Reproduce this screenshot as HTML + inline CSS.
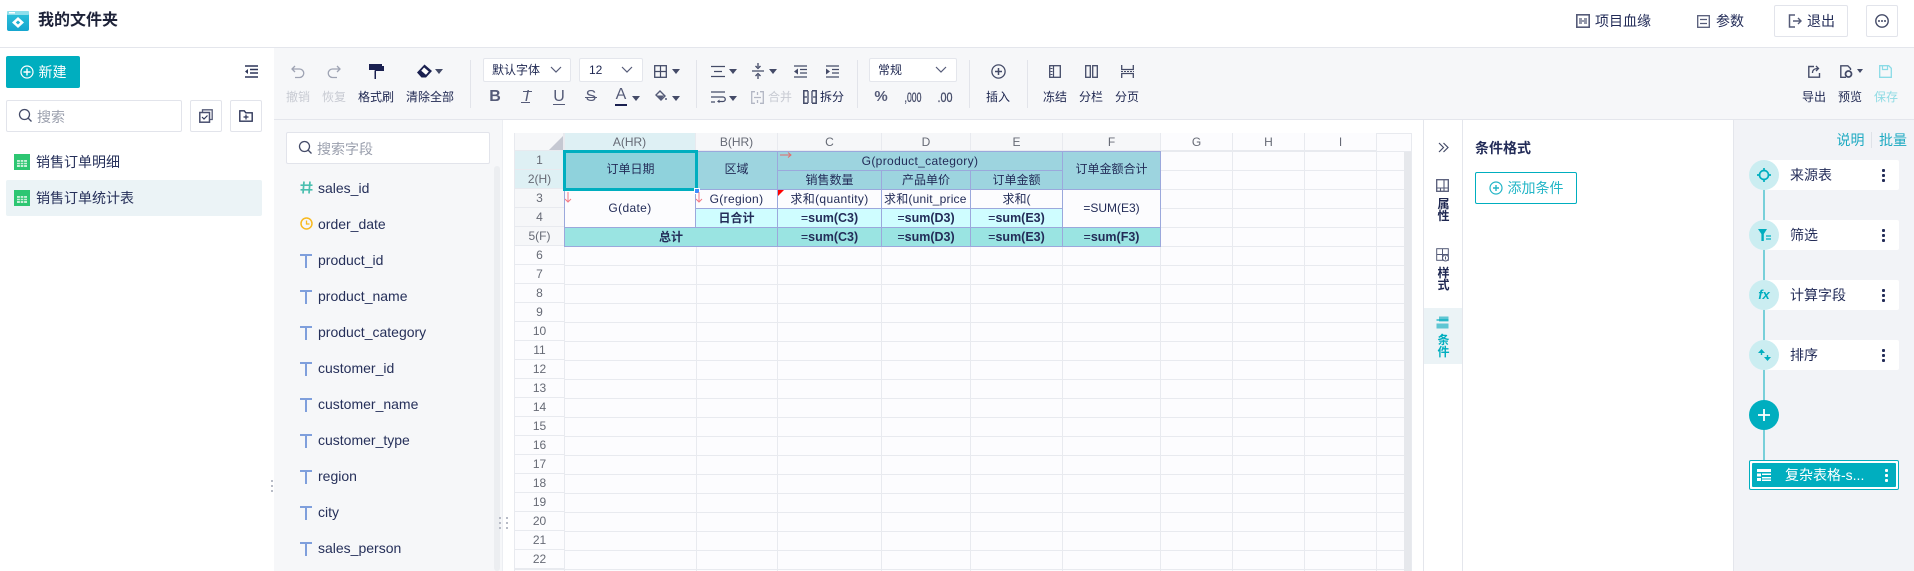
<!DOCTYPE html>
<html lang="zh"><head><meta charset="utf-8"><title>我的文件夹</title>
<style>
*{box-sizing:border-box}
html,body{margin:0;padding:0;width:1914px;height:571px;overflow:hidden;background:#fff}
body{position:relative;font-family:"Liberation Sans","Noto Sans CJK SC",sans-serif;font-size:12px;color:#1d2650}
.a{position:absolute}
.l{position:absolute;width:60px;height:18px;line-height:18px;text-align:center;top:88px;white-space:nowrap}
.dis{color:#c8cbd3}
.dv{position:absolute;width:1px;top:60px;height:48px;background:#e2e4ea}
.sel{position:absolute;top:58px;height:24px;background:#fff;border:1px solid #e4e6ec;border-radius:2px;line-height:22px;padding-left:8px;font-size:12px}
.ic{position:absolute;overflow:visible}
.box{position:absolute;background:#fff;border:1px solid #e2e4eb;border-radius:2px}
.f{position:absolute;left:318px;font-size:14px;height:20px;line-height:20px;white-space:nowrap;color:#26305a}
.t{position:absolute;left:300px;width:12px;height:14px}
.t:before{content:"";position:absolute;left:0;top:0;width:12px;height:2px;background:#7f9fdc}
.t:after{content:"";position:absolute;left:5px;top:0;width:2px;height:14px;background:#7f9fdc}
.rn{position:absolute;left:515px;width:49px;height:19px;line-height:19px;text-align:center;color:#666a75;border-bottom:1px solid #e8eaef;background:#fcfcfe}
.ch{position:absolute;top:133px;height:18px;line-height:18px;text-align:center;color:#666a75;background:#f6f7f9;border-right:1px solid #e8eaef;border-bottom:1px solid #e8eaef}
.c{position:absolute;text-align:center;border:1px solid #9ba8dc;white-space:nowrap;overflow:hidden;color:#232c58;font-size:12px}
.hd{background:#9dd4df}.sum{background:#9ae4e2;font-weight:bold}.day{background:#cffdff;font-weight:bold}.wh{background:#fcfcfe}
.c i{font-style:normal;font-weight:normal}
.s{font-size:12.5px}
.ls{letter-spacing:.35px}
.card{position:absolute;left:1764px;width:135px;height:30px;background:#fff;border-radius:2px;line-height:30px;padding-left:26px;font-size:14px;color:#232c58}
.dots{position:absolute;left:1882px;width:3px;height:13px;background:radial-gradient(circle at 1.5px 1.5px,#232c58 1.5px,transparent 1.6px) 0 0/3px 5px}
.circ{position:absolute;left:1749px;width:30px;height:30px;border-radius:50%;background:#cbedf1}
.tab{position:absolute;left:1425px;width:37px;text-align:center;font-size:12px;line-height:12px;font-weight:bold}
.gl{position:absolute;top:151px;width:1px;height:420px;background:#e8eaef}
.tb{position:absolute;top:87px;width:16px;text-align:center;font-size:16px;line-height:20px;color:#555b78}
</style></head><body>

<!-- header -->
<div class="a" style="left:0;top:47px;width:1914px;height:1px;background:#e4e6ec"></div>
<svg class="ic" style="left:7px;top:11px" width="22" height="20" viewBox="0 0 22 20"><defs><linearGradient id="g1" x1="0" y1="0" x2="0" y2="1"><stop offset="0" stop-color="#2fc3db"/><stop offset="1" stop-color="#16a6cf"/></linearGradient></defs><rect width="22" height="20" rx="2" fill="url(#g1)"/><rect width="22" height="4" rx="1" fill="#8fdfec"/><rect x="2" y="1" width="6" height="1.500" fill="#fff"/><path d="M11 6l6 5.500-6 5.500-6-5.500z" fill="#fff"/><path d="M11 9.500l2.200 2-2.200 2-2.200-2z" fill="#1fb0d3"/></svg>
<div class="a" style="left:38px;top:10px;font-size:16px;font-weight:bold;line-height:22px;color:#1d2238">我的文件夹</div>

<svg class="ic" style="left:1576px;top:14px" width="14" height="14" viewBox="0 0 14 14"><rect x=".8" y=".8" width="12.4" height="12.4" fill="none" stroke="#555b78" stroke-width="1.6"/><path d="M3 5h3M3 9h3M8 5h3M8 9h3M3 7h8" stroke="#555b78" stroke-width="1.3"/></svg>
<div class="a" style="left:1595px;top:11px;line-height:20px;font-size:14px;color:#232c58">项目血缘</div>
<svg class="ic" style="left:1697px;top:15px" width="13" height="13" viewBox="0 0 13 13"><rect x=".7" y=".7" width="11.6" height="11.6" fill="none" stroke="#555b78" stroke-width="1.3"/><path d="M3 4.500h7M3 8.500h7" stroke="#555b78" stroke-width="1.3"/></svg>
<div class="a" style="left:1716px;top:11px;line-height:20px;font-size:14px;color:#232c58">参数</div>
<div class="box" style="left:1774px;top:5px;width:74px;height:32px"></div>
<svg class="ic" style="left:1788px;top:14px" width="15" height="14" viewBox="0 0 15 14"><path d="M7 1H1.500v12H7" fill="none" stroke="#555b78" stroke-width="1.500"/><path d="M5 7h8M10 4l3 3-3 3" fill="none" stroke="#555b78" stroke-width="1.400"/></svg>
<div class="a" style="left:1807px;top:11px;line-height:20px;font-size:14px;color:#232c58">退出</div>
<div class="box" style="left:1866px;top:5px;width:32px;height:32px"></div>
<svg class="ic" style="left:1875px;top:14px" width="14" height="14" viewBox="0 0 14 14"><circle cx="7" cy="7" r="6.200" fill="none" stroke="#444b68" stroke-width="1.400"/><circle cx="4" cy="7" r="1" fill="#444b68"/><circle cx="7" cy="7" r="1" fill="#444b68"/><circle cx="10" cy="7" r="1" fill="#444b68"/></svg>

<!-- left sidebar -->
<div class="a" style="left:6px;top:56px;width:74px;height:32px;background:#00aebf;border-radius:2px"></div>
<svg class="ic" style="left:20px;top:65px" width="14" height="14" viewBox="0 0 14 14"><circle cx="7" cy="7" r="6" fill="none" stroke="#fff" stroke-width="1.200"/><path d="M7 3.500v7M3.500 7h7" stroke="#fff" stroke-width="1.400"/></svg>
<div class="a" style="left:38.500px;top:62px;line-height:20px;font-size:14px;color:#fff">新建</div>
<svg class="ic" style="left:244px;top:65px" width="14" height="13" viewBox="0 0 14 13"><path d="M1 1h13M6 4.500h8M6 8h8M1 12h13" stroke="#2d3558" stroke-width="1.500"/><path d="M4 4L1 6.500 4 9z" fill="#2d3558"/></svg>

<div class="box" style="left:6px;top:100px;width:176px;height:32px"></div>
<svg class="ic" style="left:18px;top:108px" width="15" height="15" viewBox="0 0 15 15"><circle cx="6.500" cy="6.500" r="5" fill="none" stroke="#444b68" stroke-width="1.300"/><path d="M10 10l3.500 3.500" stroke="#444b68" stroke-width="1.300"/></svg>
<div class="a" style="left:37px;top:107px;line-height:20px;font-size:14px;color:#9a9fad">搜索</div>
<div class="box" style="left:190px;top:100px;width:32px;height:32px"></div>
<svg class="ic" style="left:199px;top:109px" width="14" height="14" viewBox="0 0 14 14"><path d="M3.500 3V.8h9.700v9.700H11" fill="none" stroke="#555b78" stroke-width="1.300"/><rect x=".8" y="3.500" width="9.700" height="9.700" fill="none" stroke="#4a5070" stroke-width="1.500"/><path d="M3 8l2 2 3.500-3.500" fill="none" stroke="#2d3558" stroke-width="1.200"/></svg>
<div class="box" style="left:230px;top:100px;width:32px;height:32px"></div>
<svg class="ic" style="left:239px;top:110px" width="14" height="12" viewBox="0 0 14 12"><path d="M.8.800h4.500l1.500 2h6.400v8.400H.8z" fill="none" stroke="#2d3558" stroke-width="1.400"/><path d="M7 4.500v5M4.500 7h5" stroke="#2d3558" stroke-width="1.200"/></svg>

<svg class="ic" style="left:14px;top:154px" width="16" height="16" viewBox="0 0 16 16"><rect width="16" height="16" fill="#2dc672"/><path d="M3 6h10v7H3z" fill="#c9f0d9"/><path d="M3 8.300h10M3 10.600h10M6.300 6v7M9.700 6v7" stroke="#2dc672" stroke-width=".8"/></svg>
<div class="a" style="left:36px;top:152px;line-height:20px;font-size:14px;color:#26305a">销售订单明细</div>
<div class="a" style="left:6px;top:180px;width:256px;height:36px;background:#ebf3f6;border-radius:2px"></div>
<svg class="ic" style="left:14px;top:190px" width="16" height="16" viewBox="0 0 16 16"><rect width="16" height="16" fill="#2dc672"/><path d="M3 6h10v7H3z" fill="#c9f0d9"/><path d="M3 8.300h10M3 10.600h10M6.300 6v7M9.700 6v7" stroke="#2dc672" stroke-width=".8"/></svg>
<div class="a" style="left:36px;top:188px;line-height:20px;font-size:14px;color:#26305a">销售订单统计表</div>

<!-- toolbar bg -->
<div class="a" style="left:274px;top:48px;width:1640px;height:71px;background:#f6f7f9"></div>
<div class="a" style="left:274px;top:119px;width:1640px;height:1px;background:#e4e6ec"></div>

<svg class="ic" style="left:291px;top:65px" width="14" height="14" viewBox="0 0 14 14"><path d="M4 1L1 4l3 3" fill="none" stroke="#9ea3b3" stroke-width="1.300"/><path d="M1 4h7.500a4.200 4.200 0 0 1 0 8.500H4" fill="none" stroke="#9ea3b3" stroke-width="1.300"/></svg>
<div class="l dis" style="left:268px">撤销</div>
<svg class="ic" style="left:327px;top:65px" width="14" height="14" viewBox="0 0 14 14"><path d="M10 1l3 3-3 3" fill="none" stroke="#9ea3b3" stroke-width="1.300"/><path d="M13 4H5.500a4.200 4.200 0 0 0 0 8.500H10" fill="none" stroke="#9ea3b3" stroke-width="1.300"/></svg>
<div class="l dis" style="left:304px">恢复</div>
<svg class="ic" style="left:369px;top:64px" width="15" height="15" viewBox="0 0 15 15"><rect width="13" height="6" fill="#1a2050"/><path d="M13 2h2v5H7v8H5.500V6.500" fill="#1a2050"/></svg>
<div class="l" style="left:346px">格式刷</div>
<svg class="ic" style="left:417px;top:64px" width="16" height="14" viewBox="0 0 16 14"><path d="M7.500 .5L15 7l-6 6.500H4.500L0 8.500z" fill="#1a2050"/><path d="M7 2.800l5.500 4.700-3.500 4-5.500-4.700z" fill="#fff" stroke="#1a2050"/></svg>
<svg class="ic" style="left:435px;top:69px" width="8" height="5"><path d="M0 0h8L4 5z" fill="#444b68"/></svg>
<div class="l" style="left:400px">清除全部</div>
<div class="dv" style="left:470px"></div>

<div class="sel" style="left:483px;width:88px">默认字体</div>
<svg class="ic" style="left:550px;top:66px" width="12" height="7"><path d="M1 1l5 5 5-5" fill="none" stroke="#555b78" stroke-width="1.200"/></svg>
<div class="sel" style="left:579px;width:64px;padding-left:9px">12</div>
<svg class="ic" style="left:621px;top:66px" width="12" height="7"><path d="M1 1l5 5 5-5" fill="none" stroke="#555b78" stroke-width="1.200"/></svg>
<svg class="ic" style="left:654px;top:65px" width="13" height="13" viewBox="0 0 13 13"><rect x=".7" y=".7" width="11.600" height="11.600" fill="none" stroke="#444b68" stroke-width="1.300"/><path d="M6.500 1v11M1 6.500h11" stroke="#444b68" stroke-width="1.200"/></svg>
<svg class="ic" style="left:672px;top:69px" width="8" height="5"><path d="M0 0h8L4 5z" fill="#444b68"/></svg>

<div class="tb" style="left:487px;font-weight:bold">B</div>
<div class="tb" style="left:519px;font-style:italic">I</div>
<div class="a" style="left:523px;top:91px;width:9px;height:1px;background:#555b78"></div>
<div class="a" style="left:521px;top:102px;width:9px;height:1px;background:#555b78"></div>
<div class="tb" style="left:551px;top:87px">U</div>
<div class="a" style="left:553px;top:104px;width:12px;height:1px;background:#555b78"></div>
<div class="tb" style="left:583px">S</div>
<div class="a" style="left:585px;top:97px;width:12px;height:1px;background:#555b78"></div>
<div class="tb" style="left:613px;top:85px">A</div>
<div class="a" style="left:615px;top:104px;width:12px;height:2px;background:#1a2050"></div>
<svg class="ic" style="left:632px;top:96px" width="8" height="5"><path d="M0 0h8L4 5z" fill="#444b68"/></svg>
<svg class="ic" style="left:655px;top:90px" width="12" height="12" viewBox="0 0 12 12"><path d="M5 1l5 5-4 4-5-5z" fill="none" stroke="#555b78" stroke-width="1.400"/><path d="M2 5.500h7L6 9.500z" fill="#555b78"/><circle cx="11" cy="9" r="1" fill="#555b78"/></svg>
<svg class="ic" style="left:672px;top:96px" width="8" height="5"><path d="M0 0h8L4 5z" fill="#444b68"/></svg>
<div class="dv" style="left:696px"></div>

<svg class="ic" style="left:711px;top:65px" width="14" height="13" viewBox="0 0 14 13"><path d="M0 1.500h14M3 6.500h8M0 11.500h14" stroke="#444b68" stroke-width="1.300"/></svg>
<svg class="ic" style="left:729px;top:69px" width="8" height="5"><path d="M0 0h8L4 5z" fill="#444b68"/></svg>
<svg class="ic" style="left:752px;top:63px" width="12" height="16" viewBox="0 0 12 16"><path d="M6 0v4M3.500 3L6 5.500 8.500 3M6 16v-4M3.500 13L6 10.500 8.500 13M0 8h12" fill="none" stroke="#444b68" stroke-width="1.300"/></svg>
<svg class="ic" style="left:769px;top:69px" width="8" height="5"><path d="M0 0h8L4 5z" fill="#444b68"/></svg>
<svg class="ic" style="left:794px;top:65px" width="13" height="13" viewBox="0 0 13 13"><path d="M0 1h13M6 4.500h7M6 8h7M0 12h13" stroke="#444b68" stroke-width="1.300"/><path d="M4 3.500L0 6.500l4 3z" fill="#444b68"/></svg>
<svg class="ic" style="left:826px;top:65px" width="13" height="13" viewBox="0 0 13 13"><path d="M0 1h13M6 4.500h7M6 8h7M0 12h13" stroke="#444b68" stroke-width="1.300"/><path d="M0 3.500l4 3-4 3z" fill="#444b68"/></svg>
<svg class="ic" style="left:711px;top:91px" width="14" height="12" viewBox="0 0 14 12"><path d="M0 1h14M0 6h12a2.200 2.200 0 0 1 0 4.500H7M0 11h4" fill="none" stroke="#444b68" stroke-width="1.300"/><path d="M8.500 8.500L6 10.500l2.500 1.500z" fill="#444b68"/></svg>
<svg class="ic" style="left:729px;top:96px" width="8" height="5"><path d="M0 0h8L4 5z" fill="#444b68"/></svg>
<svg class="ic" style="left:751px;top:91px" width="13" height="13" viewBox="0 0 13 13"><path d="M4 .7H.7v11.600H4M9 .7h3.300v11.600H9M6.500 1v3M6.500 9v3M3 6.500h7" fill="none" stroke="#b3b7c4" stroke-width="1.300"/></svg>
<div class="a dis" style="left:768px;top:88px;line-height:18px">合并</div>
<svg class="ic" style="left:803px;top:90px" width="14" height="14" viewBox="0 0 14 14"><path d="M5 .8H.8v12.400H5M9 .8h4.200v12.400H9" fill="none" stroke="#444b68" stroke-width="1.500"/><path d="M5 1v12M9 1v12M1 7h3M10 7h3" stroke="#444b68" stroke-width="1.300"/></svg>
<div class="a" style="left:820px;top:88px;line-height:18px">拆分</div>
<div class="dv" style="left:857px"></div>

<div class="sel" style="left:869px;width:88px">常规</div>
<svg class="ic" style="left:935px;top:66px" width="12" height="7"><path d="M1 1l5 5 5-5" fill="none" stroke="#555b78" stroke-width="1.200"/></svg>
<div class="a" style="left:871px;top:88px;width:20px;text-align:center;font-size:15px;font-weight:bold;line-height:18px;color:#555b78">%</div>
<div class="a" style="left:893px;top:88px;width:40px;text-align:center;font-size:14px;line-height:18px;color:#444b68;transform:scaleX(.62);-webkit-text-stroke:.3px #444b68">,000</div>
<div class="a" style="left:925px;top:88px;width:40px;text-align:center;font-size:14px;line-height:18px;color:#444b68;transform:scaleX(.77);-webkit-text-stroke:.3px #444b68">.00</div>
<div class="dv" style="left:969px"></div>

<svg class="ic" style="left:991px;top:64px" width="15" height="15" viewBox="0 0 15 15"><circle cx="7.500" cy="7.500" r="6.600" fill="none" stroke="#444b68" stroke-width="1.300"/><path d="M7.500 4v7M4 7.500h7" stroke="#444b68" stroke-width="1.500"/></svg>
<div class="l" style="left:968px">插入</div>
<div class="dv" style="left:1027px"></div>
<svg class="ic" style="left:1049px;top:65px" width="12" height="13" viewBox="0 0 12 13"><rect x=".7" y=".7" width="10.600" height="11.600" fill="none" stroke="#444b68" stroke-width="1.300"/><path d="M4.500 1v11" stroke="#444b68" stroke-width="1.200"/><path d="M1.500 3.500h2M1.500 6.500h2M1.500 9.500h2" stroke="#444b68"/></svg>
<div class="l" style="left:1025px">冻结</div>
<svg class="ic" style="left:1085px;top:65px" width="13" height="13" viewBox="0 0 13 13"><rect x=".7" y=".7" width="4.600" height="11.600" fill="none" stroke="#444b68" stroke-width="1.300"/><rect x="7.700" y=".7" width="4.600" height="11.600" fill="none" stroke="#444b68" stroke-width="1.300"/></svg>
<div class="l" style="left:1061px">分栏</div>
<svg class="ic" style="left:1121px;top:65px" width="13" height="13" viewBox="0 0 13 13"><path d="M.7 0v4.500h11.600V0M.7 13V8.500h11.600V13" fill="none" stroke="#444b68" stroke-width="1.300"/><path d="M0 6.500h13" stroke="#444b68" stroke-dasharray="2 1"/></svg>
<div class="l" style="left:1097px">分页</div>

<svg class="ic" style="left:1808px;top:65px" width="13" height="13" viewBox="0 0 13 13"><path d="M6 1.500H.8v10.700h10.700V8" fill="none" stroke="#444b68" stroke-width="1.400"/><path d="M4.500 8c0-3 2-4.500 5-4.500M8 1l2.500 2.500L8 6" fill="none" stroke="#444b68" stroke-width="1.300"/></svg>
<div class="l" style="left:1784px">导出</div>
<svg class="ic" style="left:1840px;top:65px" width="14" height="13" viewBox="0 0 14 13"><path d="M6 12.300H.8V.8h7l2.700 2.700V5" fill="none" stroke="#444b68" stroke-width="1.400"/><circle cx="8.500" cy="9" r="3" fill="none" stroke="#444b68" stroke-width="1.800"/></svg>
<svg class="ic" style="left:1857px;top:69px" width="6" height="4"><path d="M0 0h6L3 4z" fill="#444b68"/></svg>
<div class="l" style="left:1820px">预览</div>
<svg class="ic" style="left:1879px;top:65px" width="13" height="13" viewBox="0 0 13 13"><path d="M.7.700h9l2.600 2.600v9H.7z" fill="none" stroke="#8adbe6" stroke-width="1.300"/><path d="M3.500 1v3.500h5V1" fill="none" stroke="#8adbe6" stroke-width="1.200"/></svg>
<div class="l" style="left:1856px;color:#8fdbe4">保存</div>

<!-- fields panel -->
<div class="a" style="left:274px;top:120px;width:228px;height:451px;background:#f6f7f9"></div>
<div class="a" style="left:502px;top:120px;width:1px;height:451px;background:#eceef2"></div>
<div class="box" style="left:286px;top:132px;width:204px;height:32px"></div>
<svg class="ic" style="left:298px;top:140px" width="15" height="15" viewBox="0 0 15 15"><circle cx="6.500" cy="6.500" r="5" fill="none" stroke="#444b68" stroke-width="1.300"/><path d="M10 10l3.500 3.500" stroke="#444b68" stroke-width="1.300"/></svg>
<div class="a" style="left:317px;top:139px;line-height:20px;font-size:14px;color:#9a9fad">搜索字段</div>
<div class="a" style="left:494px;top:166px;width:6px;height:405px;background:#eceef1;border-radius:3px"></div>

<svg class="ic" style="left:300px;top:181px" width="13" height="13" viewBox="0 0 13 13"><path d="M4 .5L3 12.500M10 .5L9 12.500M.5 4.200h12M.5 8.800h12" stroke="#4bbfb0" stroke-width="1.700"/></svg>
<div class="f" style="top:178px">sales_id</div>
<svg class="ic" style="left:300px;top:217px" width="13" height="13" viewBox="0 0 13 13"><circle cx="6.500" cy="6.500" r="5.500" fill="none" stroke="#f8b91f" stroke-width="1.500"/><path d="M6.500 3.500v3.500h3" fill="none" stroke="#f8b91f" stroke-width="1.300"/></svg>
<div class="f" style="top:214px">order_date</div>
<div class="t" style="top:254px"></div><div class="f" style="top:250px">product_id</div>
<div class="t" style="top:290px"></div><div class="f" style="top:286px">product_name</div>
<div class="t" style="top:326px"></div><div class="f" style="top:322px">product_category</div>
<div class="t" style="top:362px"></div><div class="f" style="top:358px">customer_id</div>
<div class="t" style="top:398px"></div><div class="f" style="top:394px">customer_name</div>
<div class="t" style="top:434px"></div><div class="f" style="top:430px">customer_type</div>
<div class="t" style="top:470px"></div><div class="f" style="top:466px">region</div>
<div class="t" style="top:506px"></div><div class="f" style="top:502px">city</div>
<div class="t" style="top:542px"></div><div class="f" style="top:538px">sales_person</div>

<div class="a" style="left:271px;top:480px;width:2px;height:13px;background:repeating-linear-gradient(#b8bcc7 0 2px,transparent 2px 5px)"></div>
<div class="a" style="left:499px;top:517px;width:2px;height:13px;background:repeating-linear-gradient(#b8bcc7 0 2px,transparent 2px 5px)"></div>
<div class="a" style="left:506px;top:517px;width:2px;height:13px;background:repeating-linear-gradient(#b8bcc7 0 2px,transparent 2px 5px)"></div>

<!-- grid -->
<div class="a" style="left:514px;top:133px;width:898px;height:438px;border:1px solid #e8eaef;border-bottom:0;background:#fcfcfe;background-image:linear-gradient(#e8eaef 1px,transparent 1px);background-size:100% 19px;background-position:0 17px"></div>
<div class="gl" style="left:696px"></div>
<div class="gl" style="left:777px"></div>
<div class="gl" style="left:881px"></div>
<div class="gl" style="left:970px"></div>
<div class="gl" style="left:1062px"></div>
<div class="gl" style="left:1160px"></div>
<div class="gl" style="left:1232px"></div>
<div class="gl" style="left:1304px"></div>
<div class="gl" style="left:1376px"></div>
<div class="a" style="left:1404px;top:152px;width:7px;height:419px;background:#e6e8ec"></div>

<div class="a" style="left:515px;top:133px;width:49px;height:18px;background:#f6f7f9;border-right:1px solid #e8eaef;border-bottom:1px solid #e8eaef"></div>
<svg class="ic" style="left:549px;top:136px" width="14" height="14"><path d="M14 0v14H0z" fill="#c5c8d2"/></svg>
<div class="ch" style="left:564px;width:132px;background:#def0f4">A(HR)</div>
<div class="ch" style="left:696px;width:82px">B(HR)</div>
<div class="ch" style="left:778px;width:104px">C</div>
<div class="ch" style="left:882px;width:89px">D</div>
<div class="ch" style="left:971px;width:92px">E</div>
<div class="ch" style="left:1063px;width:98px">F</div>
<div class="ch" style="left:1161px;width:72px;background:#fcfcfe">G</div>
<div class="ch" style="left:1233px;width:72px;background:#fcfcfe">H</div>
<div class="ch" style="left:1305px;width:72px;background:#fcfcfe">I</div>

<div class="rn" style="top:151px;background:#def0f4">1</div>
<div class="rn" style="top:170px;background:#def0f4">2(H)</div>
<div class="rn" style="top:189px;background:#f6f7f9">3</div>
<div class="rn" style="top:208px;background:#f6f7f9">4</div>
<div class="rn" style="top:227px;background:#f6f7f9">5(F)</div>
<div class="rn" style="top:246px">6</div>
<div class="rn" style="top:265px">7</div>
<div class="rn" style="top:284px">8</div>
<div class="rn" style="top:303px">9</div>
<div class="rn" style="top:322px">10</div>
<div class="rn" style="top:341px">11</div>
<div class="rn" style="top:360px">12</div>
<div class="rn" style="top:379px">13</div>
<div class="rn" style="top:398px">14</div>
<div class="rn" style="top:417px">15</div>
<div class="rn" style="top:436px">16</div>
<div class="rn" style="top:455px">17</div>
<div class="rn" style="top:474px">18</div>
<div class="rn" style="top:493px">19</div>
<div class="rn" style="top:512px">20</div>
<div class="rn" style="top:531px">21</div>
<div class="rn" style="top:550px">22</div>
<div class="a" style="left:564px;top:133px;width:1px;height:438px;background:#e8eaef"></div>

<div class="c hd" style="left:695px;top:151px;width:83px;height:39px;line-height:35px">区域</div>
<div class="c hd ls" style="left:777px;top:151px;width:286px;height:20px;line-height:18px">G(product_category)</div>
<div class="c hd" style="left:777px;top:170px;width:105px;height:20px;line-height:18px">销售数量</div>
<div class="c hd" style="left:881px;top:170px;width:90px;height:20px;line-height:18px">产品单价</div>
<div class="c hd" style="left:970px;top:170px;width:93px;height:20px;line-height:18px">订单金额</div>
<div class="c hd" style="left:1062px;top:151px;width:99px;height:39px;line-height:35px">订单金额合计</div>
<div class="c wh ls" style="left:564px;top:189px;width:132px;height:39px;line-height:37px">G(date)</div>
<div class="c wh ls" style="left:695px;top:189px;width:83px;height:20px;line-height:18px">G(region)</div>
<div class="c wh ls" style="left:777px;top:189px;width:105px;height:20px;line-height:18px">求和(quantity)</div>
<div class="c wh" style="left:881px;top:189px;width:90px;height:20px;line-height:18px;text-align:left;padding-left:2px;letter-spacing:.2px">求和(unit_price</div>
<div class="c wh" style="left:970px;top:189px;width:93px;height:20px;line-height:18px">求和(</div>
<div class="c wh" style="left:1062px;top:189px;width:99px;height:39px;line-height:37px">=SUM(E3)</div>
<div class="c day" style="left:695px;top:208px;width:83px;height:20px;line-height:18px">日合计</div>
<div class="c day s" style="left:777px;top:208px;width:105px;height:20px;line-height:18px"><i>=</i>sum(C3)</div>
<div class="c day s" style="left:881px;top:208px;width:90px;height:20px;line-height:18px"><i>=</i>sum(D3)</div>
<div class="c day s" style="left:970px;top:208px;width:93px;height:20px;line-height:18px"><i>=</i>sum(E3)</div>
<div class="c sum" style="left:564px;top:227px;width:214px;height:20px;line-height:18px">总计</div>
<div class="c sum s" style="left:777px;top:227px;width:105px;height:20px;line-height:18px"><i>=</i>sum(C3)</div>
<div class="c sum s" style="left:881px;top:227px;width:90px;height:20px;line-height:18px"><i>=</i>sum(D3)</div>
<div class="c sum s" style="left:970px;top:227px;width:93px;height:20px;line-height:18px"><i>=</i>sum(E3)</div>
<div class="c sum s" style="left:1062px;top:227px;width:99px;height:20px;line-height:18px"><i>=</i>sum(F3)</div>
<div class="c" style="left:563px;top:150px;width:135px;height:41px;line-height:33px;border:3px solid #00aebf;background:#8fd2dc">订单日期</div>
<div class="a" style="left:694px;top:188px;width:6px;height:6px;background:#3f8cff;border:1px solid #fff"></div>

<svg class="ic" style="left:780px;top:152px" width="12" height="6" viewBox="0 0 12 6"><path d="M0 3h11M8 .5L11 3 8 5.500" fill="none" stroke="#e46a6a"/></svg>
<svg class="ic" style="left:564px;top:192px" width="8" height="11" viewBox="0 0 8 11"><path d="M4 0v10M1 7l3 3 3-3" fill="none" stroke="#f47a86"/></svg>
<svg class="ic" style="left:695px;top:192px" width="8" height="11" viewBox="0 0 8 11"><path d="M4 0v10M1 7l3 3 3-3" fill="none" stroke="#f47a86"/></svg>
<svg class="ic" style="left:778px;top:190px" width="6" height="6"><path d="M0 0h6L0 6z" fill="#f00"/></svg>

<!-- tabs -->
<div class="a" style="left:1423px;top:120px;width:1px;height:451px;background:#e4e6ec"></div>
<div class="a" style="left:1462px;top:120px;width:1px;height:451px;background:#e4e6ec"></div>
<div class="a" style="left:1424px;top:308px;width:38px;height:56px;background:#ebf3f6"></div>
<svg class="ic" style="left:1438px;top:142px" width="11" height="11" viewBox="0 0 11 11"><path d="M1 1l4.500 4.500L1 10M5.500 1l4.500 4.500L5.500 10" fill="none" stroke="#444b68" stroke-width="1.200"/></svg>
<svg class="ic" style="left:1436px;top:179px" width="13" height="13" viewBox="0 0 13 13"><rect x=".7" y=".7" width="11.600" height="11.600" fill="none" stroke="#555b78" stroke-width="1.300"/><path d="M1 9h11M4.500 9v3M8 9v3M8 1v8" stroke="#555b78" stroke-width="1.100"/></svg>
<div class="tab" style="top:198px">属<br>性</div>
<svg class="ic" style="left:1436px;top:248px" width="13" height="14" viewBox="0 0 13 14"><rect x=".7" y=".7" width="11.600" height="11.600" fill="none" stroke="#555b78"/><path d="M1 6.500h11M6.500 1v11" stroke="#555b78"/><circle cx="9.500" cy="10" r="3" fill="#fff" stroke="#555b78"/><path d="M9.500 8.500v3" stroke="#555b78"/></svg>
<div class="tab" style="top:267px">样<br>式</div>
<svg class="ic" style="left:1436px;top:316px" width="13" height="13" viewBox="0 0 13 13"><rect x="3" y=".5" width="9.500" height="5" fill="#5fc6d3"/><rect x=".5" y="3" width="12" height="2" fill="#00aebf" opacity=".6"/><rect x=".5" y="7.500" width="12" height="5" fill="#5fc6d3"/></svg>
<div class="tab" style="top:334px;color:#00aebf">条<br>件</div>

<!-- conditions -->
<div class="a" style="left:1475px;top:138px;font-weight:bold;font-size:14px;line-height:20px;color:#232c58">条件格式</div>
<div class="a" style="left:1475px;top:172px;width:102px;height:32px;border:1px solid #00aebf;border-radius:2px"></div>
<svg class="ic" style="left:1489px;top:181px" width="14" height="14" viewBox="0 0 14 14"><circle cx="7" cy="7" r="6" fill="none" stroke="#22b5c6" stroke-width="1.200"/><path d="M7 4v6M4 7h6" stroke="#22b5c6" stroke-width="1.400"/></svg>
<div class="a" style="left:1507.500px;top:178px;line-height:20px;font-size:14px;color:#22b5c6">添加条件</div>

<!-- flow -->
<div class="a" style="left:1733px;top:120px;width:181px;height:451px;background:#f2f3f7;border-left:1px solid #e4e6ec"></div>
<div class="a" style="left:1836.500px;top:130px;line-height:20px;font-size:14px;color:#1eaac2">说明</div>
<div class="a" style="left:1871px;top:132px;width:1px;height:16px;background:#dfe2e8"></div>
<div class="a" style="left:1879px;top:130px;line-height:20px;font-size:14px;color:#1eaac2">批量</div>
<div class="a" style="left:1763px;top:180px;width:2px;height:285px;background:#78cfd9"></div>
<div class="card" style="top:160px">来源表</div>
<div class="dots" style="top:169px"></div>
<div class="circ" style="top:160px"></div>
<svg class="ic" style="left:1757px;top:168px" width="14" height="14" viewBox="0 0 14 14"><circle cx="7" cy="7" r="4.500" fill="none" stroke="#00aebf" stroke-width="1.700"/><path d="M7 0v3.500M7 10.500V14M0 7h3.500M10.500 7H14" stroke="#00aebf" stroke-width="1.700"/></svg>
<div class="card" style="top:220px">筛选</div>
<div class="dots" style="top:229px"></div>
<div class="circ" style="top:220px"></div>
<svg class="ic" style="left:1758px;top:229px" width="13" height="12" viewBox="0 0 13 12"><path d="M0 0h9L5.800 5v7H3.400V5z" fill="#00aebf"/><path d="M8 7h5M8 10h5" stroke="#00aebf" stroke-width="1.200"/></svg>
<div class="card" style="top:280px">计算字段</div>
<div class="dots" style="top:289px"></div>
<div class="circ" style="top:280px"></div>
<div class="a" style="left:1749px;top:280px;width:30px;height:30px;text-align:center;line-height:29px;font-style:italic;font-weight:bold;font-size:13px;color:#00aebf">fx</div>
<div class="card" style="top:340px">排序</div>
<div class="dots" style="top:349px"></div>
<div class="circ" style="top:340px"></div>
<svg class="ic" style="left:1758px;top:349px" width="13" height="12" viewBox="0 0 13 12"><path d="M3.500 0l3.500 4H0zM9.500 12L6 8h7z" fill="#00aebf"/><path d="M3.500 3v3M9.500 9V6" stroke="#00aebf" stroke-width="1.400"/></svg>
<div class="a" style="left:1749px;top:400px;width:30px;height:30px;border-radius:50%;background:#00aebf"></div>
<svg class="ic" style="left:1757px;top:408px" width="14" height="14" viewBox="0 0 14 14"><path d="M7 1v12M1 7h12" stroke="#fff" stroke-width="1.800"/></svg>
<div class="a" style="left:1749px;top:460px;width:150px;height:30px;background:#fff;border:1px solid #00aebf;border-radius:2px"></div>
<div class="a" style="left:1752px;top:463px;width:144px;height:24px;background:#00aebf;border-radius:1px"></div>
<svg class="ic" style="left:1757px;top:469px" width="14" height="12" viewBox="0 0 14 12"><path d="M0 0h14v3H0zM0 4.500h4v3H0zM5 4.500h9v1.500H5zM0 9h4v3H0zM5 8h9v1.500H5zM5 10.500h9V12H5z" fill="#fff"/></svg>
<div class="a" style="left:1785px;top:465px;line-height:20px;font-size:14px;color:#fff;white-space:nowrap">复杂表格-s...</div>
<div class="dots" style="left:1885px;top:469px;background-image:radial-gradient(circle at 1.500px 1.500px,#fff 1.500px,transparent 1.600px)"></div>

</body></html>
